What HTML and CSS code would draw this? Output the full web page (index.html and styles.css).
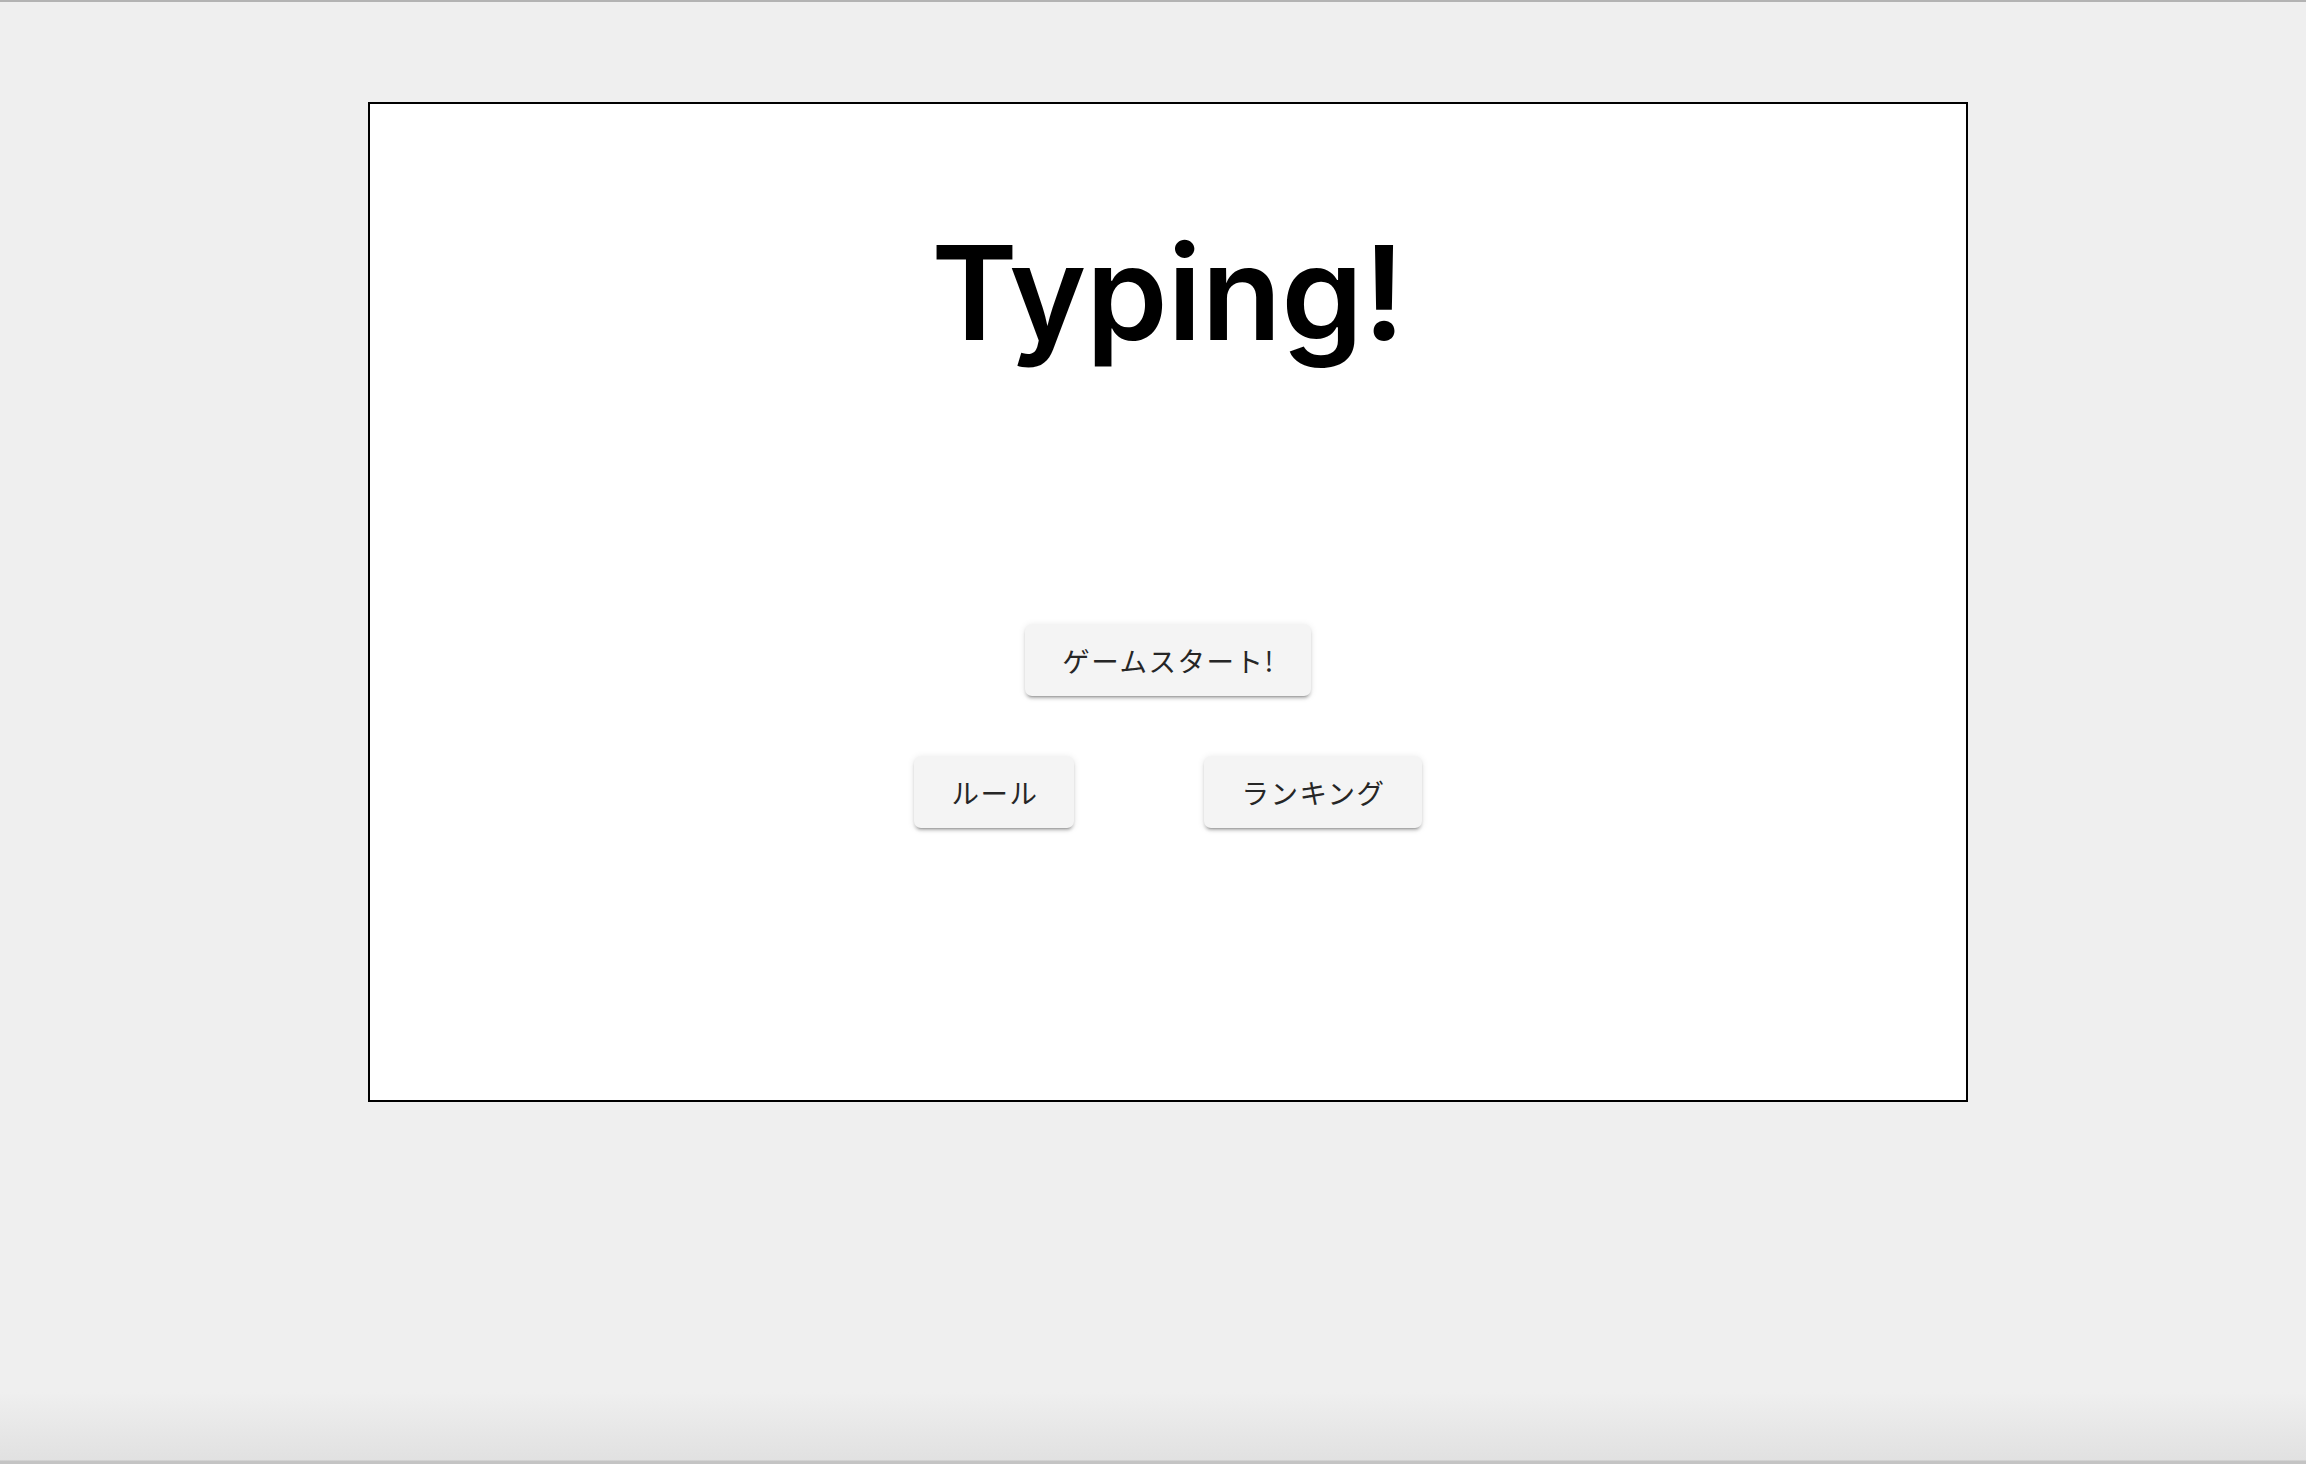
FILE: index.html
```html
<!DOCTYPE html>
<html lang="ja">
<head>
<meta charset="utf-8">
<title>Typing!</title>
<link rel="stylesheet" href="styles.css">
</head>
<body>
<div class="topbar"></div>
<main class="stage">
  <h1 class="title">Typing!</h1>
  <div class="menu">
    <button class="btn btn-start">ゲームスタート!</button>
    <div class="row">
      <button class="btn">ルール</button>
      <button class="btn">ランキング</button>
    </div>
  </div>
</main>
</body>
</html>
```
FILE: styles.css
```css
html {
  height: 1464px;
}
body {
  margin: 0;
  height: 1464px;
  overflow: hidden;
  background: linear-gradient(to bottom, #efefef 0, #efefef 1392px, #e1e1e1 1460px, #c4c4c4 1461px, #c4c4c4 1464px);
  font-family: "Noto Sans CJK JP", "Noto Sans", sans-serif;
}
.topbar {
  height: 2px;
  background: #b3b3b3;
}
.stage {
  box-sizing: border-box;
  width: 1600px;
  height: 1000px;
  margin: 100px 0 0 368px;
  background: #fff;
  border: 2px solid #000;
  display: flex;
  flex-direction: column;
  align-items: center;
}
.title {
  margin: 0 0 0 0;
  padding-top: 109px;
  font-family: "Inter", "Noto Sans", sans-serif;
  font-weight: 600;
  font-size: 131px;
  line-height: 160px;
  height: 160px;
  color: #000;
  letter-spacing: -0.3px;
}
.menu {
  margin-top: 251px;
  display: flex;
  flex-direction: column;
  align-items: center;
  gap: 60px;
}
.row {
  display: flex;
  gap: 130px;
}
.btn {
  height: 72px;
  padding: 0 36px 0 37px;
  border: none;
  border-radius: 7px;
  background: #f4f4f4;
  color: #262626;
  font-family: "Noto Sans CJK JP", sans-serif;
  font-weight: 400;
  font-size: 27.5px;
  letter-spacing: 1.5px;
  box-shadow: 0 4px 2px -3px rgba(0,0,0,0.25), 0 3px 3px 0 rgba(0,0,0,0.14), 0 1px 7px 0 rgba(0,0,0,0.1);
  cursor: pointer;
}
```
